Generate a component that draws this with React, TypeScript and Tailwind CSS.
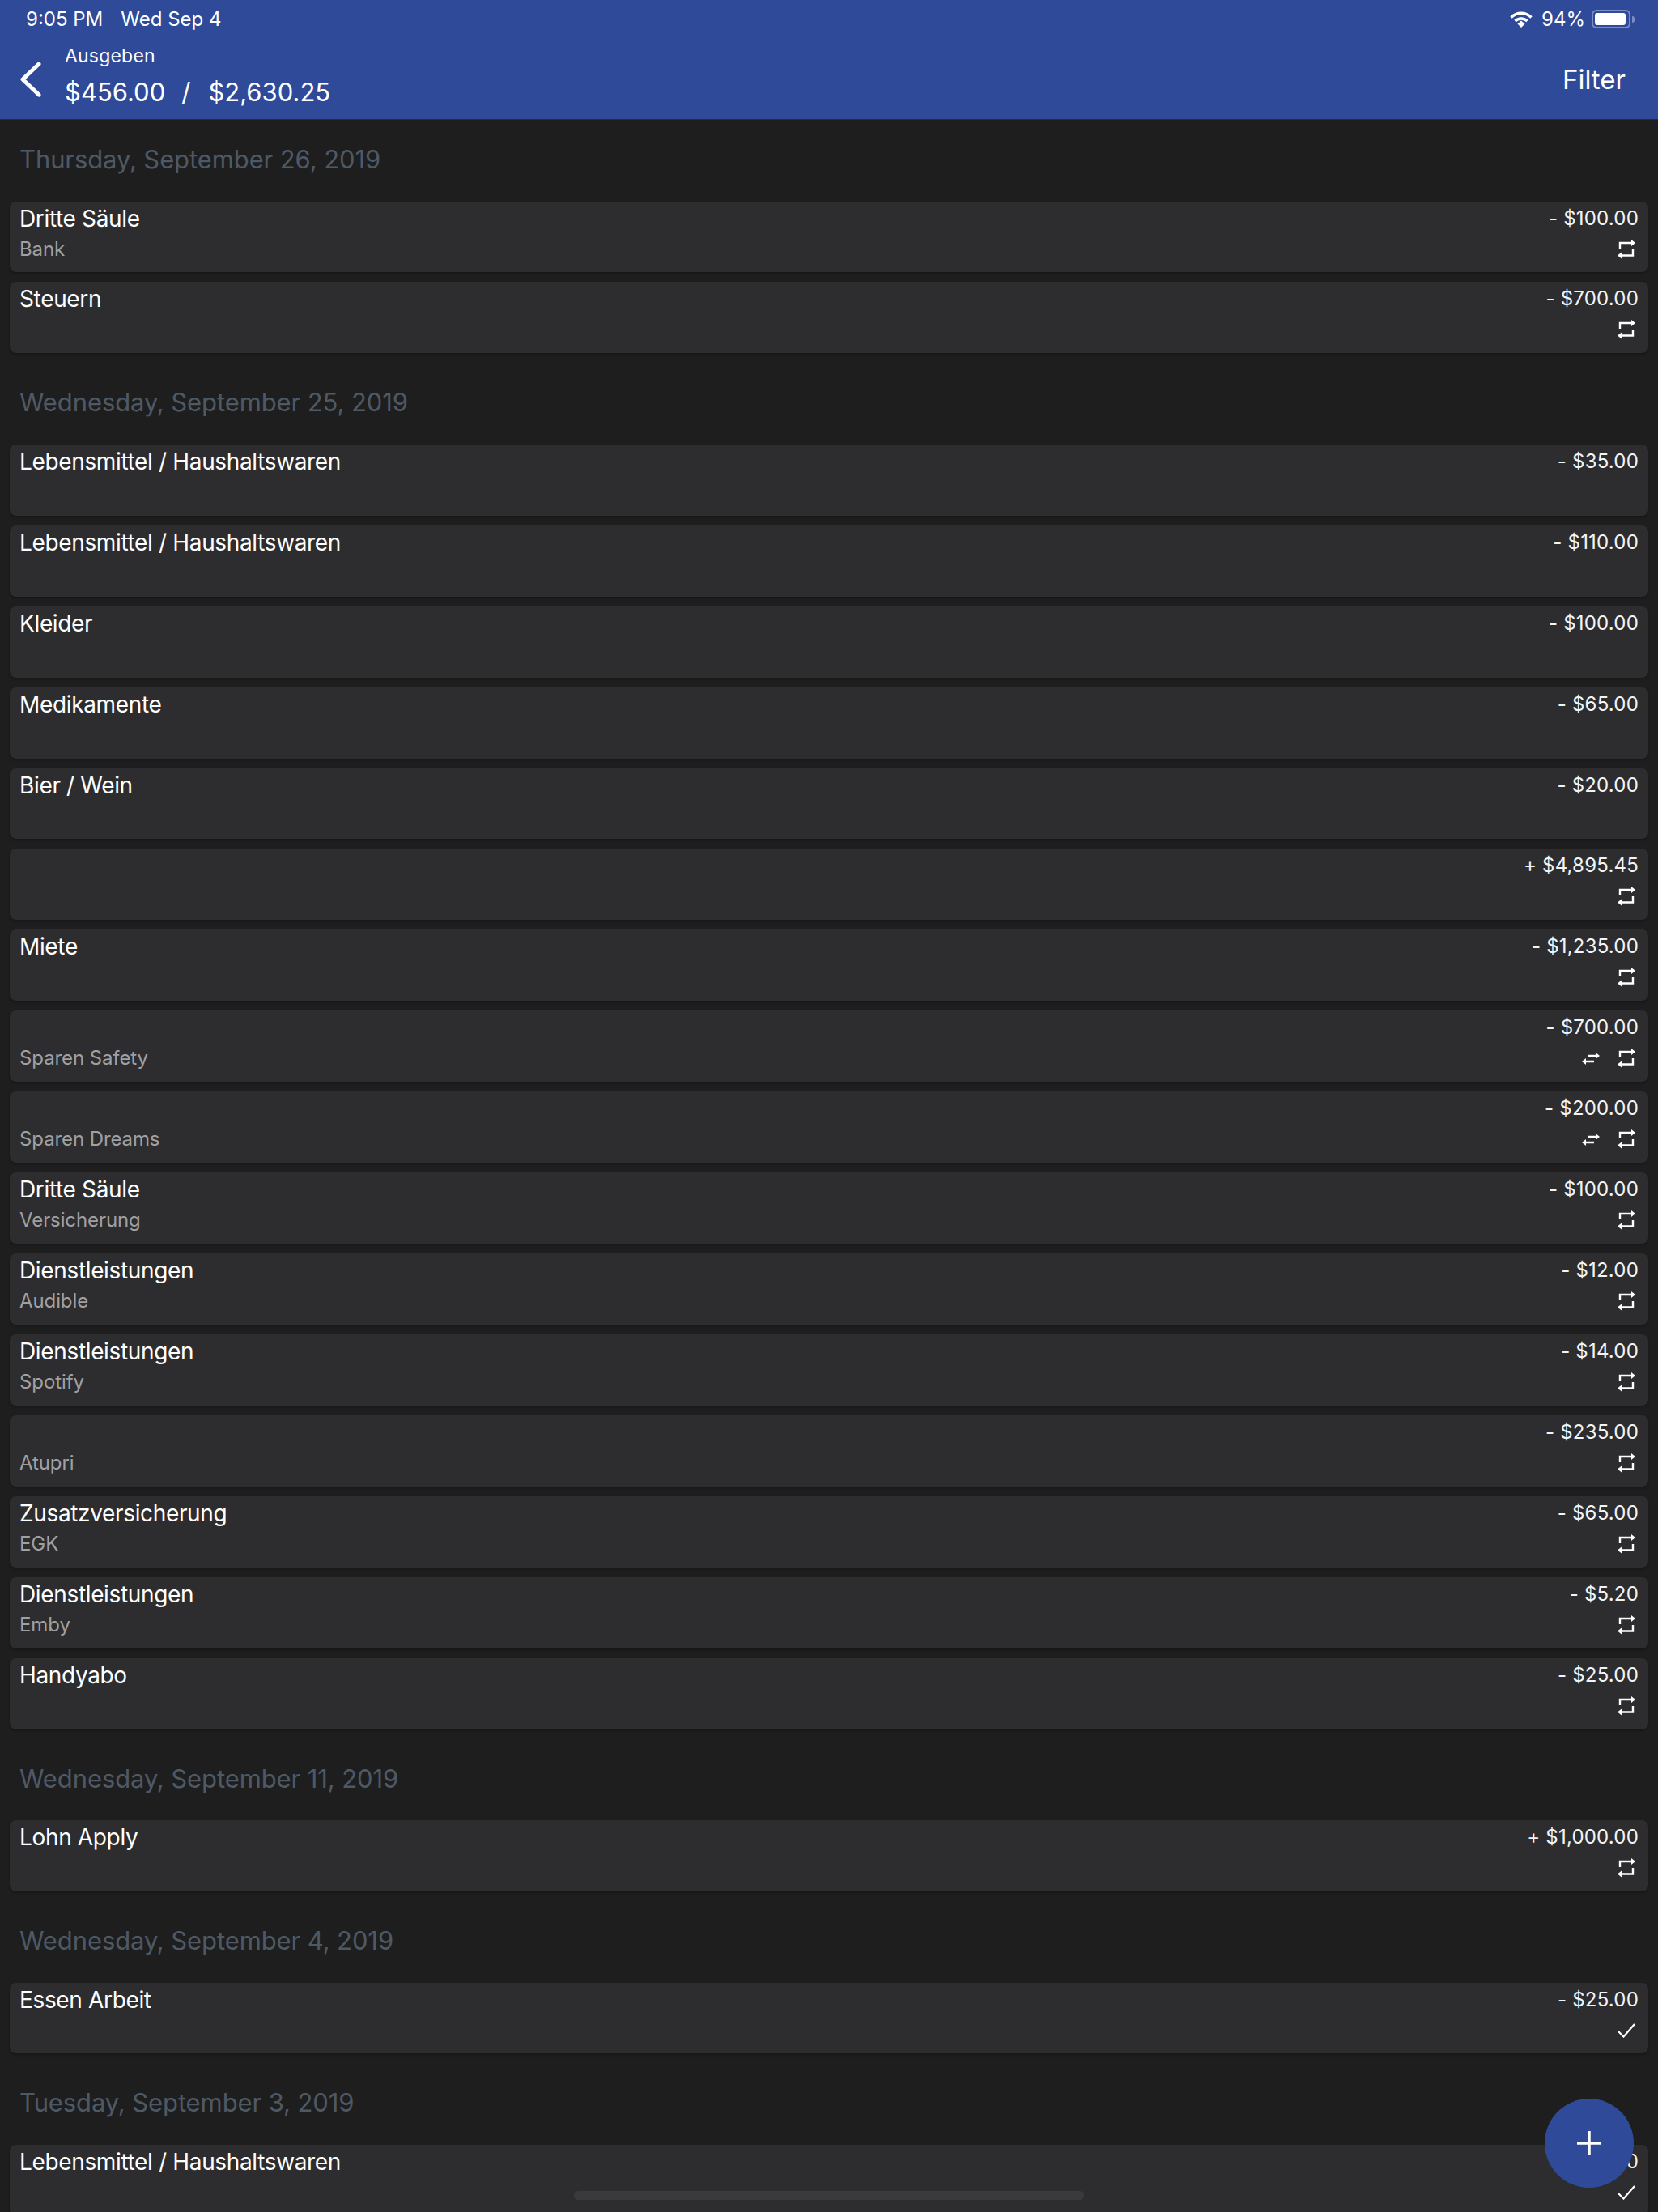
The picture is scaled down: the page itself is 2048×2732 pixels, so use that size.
type Row = {
  title?: string;
  sub?: string;
  amount: string;
  swap?: boolean;
  icon?: "repeat" | "check";
};

type Section = { date: string; rows: Row[] };

const SECTIONS: Section[] = [
  {
    date: "Thursday, September 26, 2019",
    rows: [
      { title: "Dritte Säule", sub: "Bank", amount: "- $100.00", icon: "repeat" },
      { title: "Steuern", amount: "- $700.00", icon: "repeat" },
    ],
  },
  {
    date: "Wednesday, September 25, 2019",
    rows: [
      { title: "Lebensmittel / Haushaltswaren", amount: "- $35.00" },
      { title: "Lebensmittel / Haushaltswaren", amount: "- $110.00" },
      { title: "Kleider", amount: "- $100.00" },
      { title: "Medikamente", amount: "- $65.00" },
      { title: "Bier / Wein", amount: "- $20.00" },
      { amount: "+ $4,895.45", icon: "repeat" },
      { title: "Miete", amount: "- $1,235.00", icon: "repeat" },
      { sub: "Sparen Safety", amount: "- $700.00", swap: true, icon: "repeat" },
      { sub: "Sparen Dreams", amount: "- $200.00", swap: true, icon: "repeat" },
      { title: "Dritte Säule", sub: "Versicherung", amount: "- $100.00", icon: "repeat" },
      { title: "Dienstleistungen", sub: "Audible", amount: "- $12.00", icon: "repeat" },
      { title: "Dienstleistungen", sub: "Spotify", amount: "- $14.00", icon: "repeat" },
      { sub: "Atupri", amount: "- $235.00", icon: "repeat" },
      { title: "Zusatzversicherung", sub: "EGK", amount: "- $65.00", icon: "repeat" },
      { title: "Dienstleistungen", sub: "Emby", amount: "- $5.20", icon: "repeat" },
      { title: "Handyabo", amount: "- $25.00", icon: "repeat" },
    ],
  },
  {
    date: "Wednesday, September 11, 2019",
    rows: [{ title: "Lohn Apply", amount: "+ $1,000.00", icon: "repeat" }],
  },
  {
    date: "Wednesday, September 4, 2019",
    rows: [{ title: "Essen Arbeit", amount: "- $25.00", icon: "check" }],
  },
  {
    date: "Tuesday, September 3, 2019",
    rows: [{ title: "Lebensmittel / Haushaltswaren", amount: "- $50.00", icon: "check" }],
  },
];

function RepeatIcon() {
  return (
    <svg width="22" height="24" viewBox="0 0 22 24" fill="none" className="text-white">
      <path d="M3 11V4H18M19 12V19.5H5" stroke="currentColor" strokeWidth="2.4" />
      <path d="M17 0L22 4L17 8ZM5 15.5L0 19.5L5 23.5Z" fill="currentColor" />
    </svg>
  );
}

function SwapIcon() {
  return (
    <svg width="22" height="17" viewBox="0 0 22 17" fill="none" className="text-white">
      <path d="M7 5H18M15 12H4" stroke="currentColor" strokeWidth="2.4" />
      <path d="M17 1L22 5L17 9ZM5 8L0 12L5 16Z" fill="currentColor" />
    </svg>
  );
}

function CheckIcon() {
  return (
    <svg width="22" height="18" viewBox="0 0 22 18" fill="none" className="text-white">
      <path d="M1 10L7.5 16.5L21 1" stroke="currentColor" strokeWidth="2.2" />
    </svg>
  );
}

function Card({ row }: { row: Row }) {
  return (
    <div className="grid h-[87.93px] grid-cols-[1fr_auto] grid-rows-[32px_32px] gap-y-[6px] rounded-lg bg-[#2d2d2f] px-3 pt-[5px] shadow-[0_2px_3px_rgba(0,0,0,0.25)]">
      <div className="text-[28px] leading-8 tracking-[-0.35px] text-white">{row.title}</div>
      <div className="text-right text-2xl leading-8 tracking-[0.2px] text-[#f4f4f4]">{row.amount}</div>
      <div className="text-2xl leading-8 tracking-[-0.1px] text-[#a0a0a2]">{row.sub}</div>
      <div className="flex items-center justify-end gap-[22px] pr-1">
        {row.swap ? <SwapIcon /> : null}
        {row.icon === "repeat" ? <RepeatIcon /> : null}
        {row.icon === "check" ? <CheckIcon /> : null}
      </div>
    </div>
  );
}

export default function App() {
  return (
    <div className="relative h-[2732px] w-[2048px] overflow-hidden bg-[#1e1e1e] font-['Inter',sans-serif]">
      <header className="h-[148px] border-b border-[#1a2a5c] bg-[#304a9a] text-white">
        <div className="flex h-[46px] items-center justify-between pl-8 pr-[29px] pt-px text-2xl">
          <div className="flex gap-[22px]">
            <span>9:05 PM</span>
            <span>Wed Sep 4</span>
          </div>
          <div className="flex items-center">
            <svg width="30" height="20" viewBox="0 0 28 20" fill="none" className="mr-[10px]">
              <path d="M1.5 7.5C8.5 0.5 19.5 0.5 26.5 7.5" stroke="white" strokeWidth="3.4" />
              <path d="M6.5 12C10.5 8 17.5 8 21.5 12" stroke="white" strokeWidth="3.4" />
              <path d="M9.5 15.5L14 11.5L18.5 15.5L14 20Z" fill="white" />
            </svg>
            <span>94%</span>
            <div className="ml-2 flex items-center gap-[2px]">
              <div className="h-[23px] w-12 rounded-md border-2 border-[#7c8dc4] p-[2px]">
                <div className="h-full w-[95%] rounded-[3px] bg-white" />
              </div>
              <div className="h-2 w-[3px] rounded-r-sm bg-[#7c8dc4]" />
            </div>
          </div>
        </div>
        <div className="flex items-start justify-between pl-6 pr-10">
          <div className="flex items-start gap-[29px]">
            <svg width="27" height="44" viewBox="0 0 27 44" fill="none" className="mt-[30px]">
              <path d="M24 3L4 22L24 41" stroke="white" strokeWidth="5" strokeLinecap="round" strokeLinejoin="round" />
            </svg>
            <div className="mt-2">
              <div className="text-[23px] leading-[30px] tracking-[0.2px]">Ausgeben</div>
              <div className="mt-[10px] flex text-[31px] leading-[40px]">
                <span>$456.00</span>
                <span className="ml-5 mr-[22px]">/</span>
                <span>$2,630.25</span>
              </div>
            </div>
          </div>
          <span className="mt-8 text-[33px] leading-[40px]">Filter</span>
        </div>
      </header>
      <main className="flex flex-col gap-3 px-3">
        {SECTIONS.map((s) => (
          <section key={s.date}>
            <h2 className="flex h-[100.5px] items-center pb-[2px] pl-3 text-[31px] font-normal tracking-[-0.1px] text-[#4e5966]">{s.date}</h2>
            <div className="flex flex-col gap-3">
              {s.rows.map((r, i) => (
                <Card key={i} row={r} />
              ))}
            </div>
          </section>
        ))}
      </main>
      <button className="absolute left-[1908px] top-[2592px] flex h-[110px] w-[110px] items-center justify-center rounded-full bg-[#304a9a]">
        <svg width="30" height="30" viewBox="0 0 30 30" fill="none">
          <path d="M15 0V30M0 15H30" stroke="white" strokeWidth="3.5" />
        </svg>
      </button>
      <div className="absolute left-[709px] top-[2706px] h-[11px] w-[630px] rounded-full bg-[#3a3a3a]" />
    </div>
  );
}
